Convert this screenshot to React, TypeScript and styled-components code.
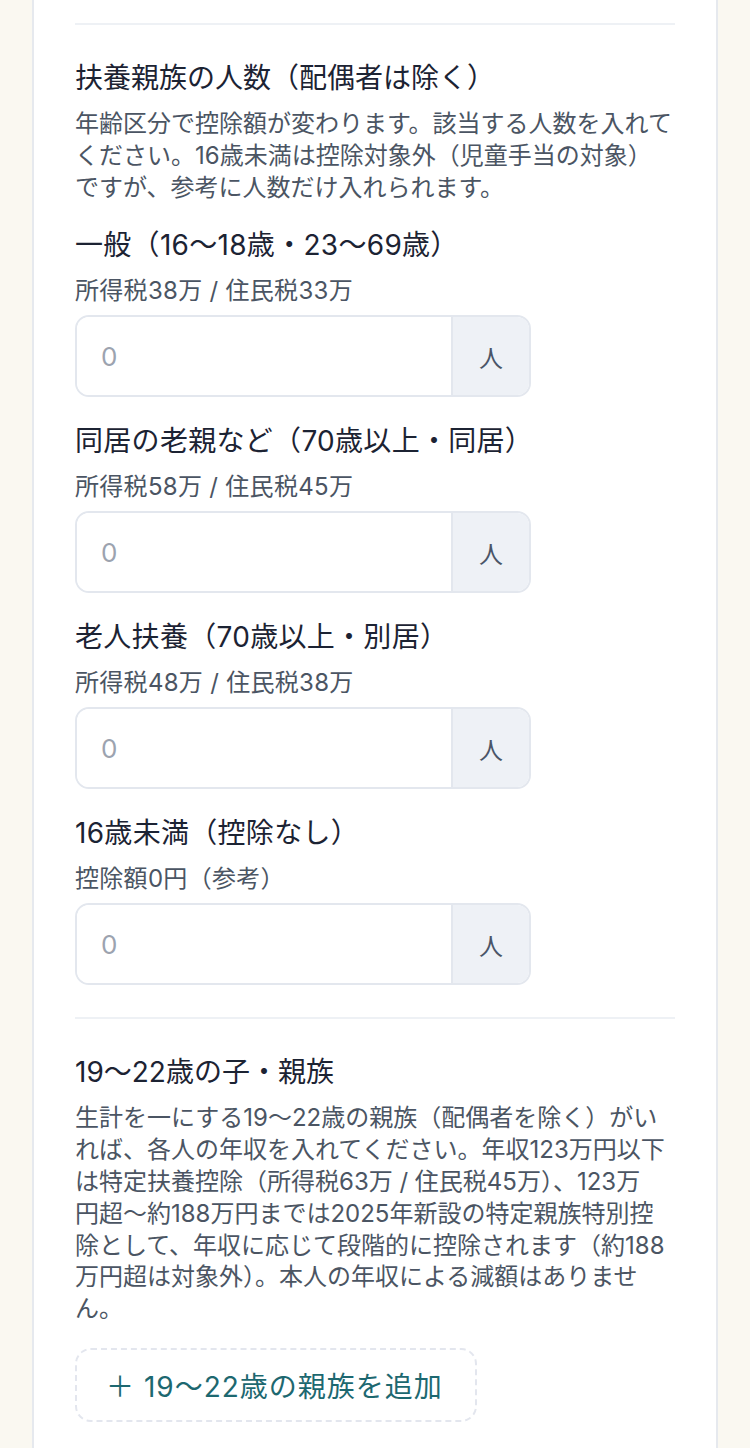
import styled, { createGlobalStyle } from "styled-components";

const GlobalStyle = createGlobalStyle`
  html, body {
    margin: 0;
    padding: 0;
    background: #faf8f1;
  }
  body {
    font-family: Inter, "Noto Sans CJK JP", "Noto Sans", sans-serif;
    color: #1c2333;
  }
  * { box-sizing: border-box; }
`;

const Page = styled.div`
  padding: 0 32px;
  min-height: 1448px;
`;

const Card = styled.div`
  background: #fff;
  border-left: 2px solid #e6e9ee;
  border-right: 2px solid #e6e9ee;
  padding: 23px 41px 80px;
  min-height: 1448px;
`;

const Divider = styled.hr`
  border: none;
  height: 2px;
  background: #eef1f5;
  margin: 0;
`;

const Section = styled.section`
  padding-top: 34px;
  padding-bottom: 32px;
`;

const SectionTitle = styled.h2`
  margin: 0;
  font-size: 28px;
  font-weight: 400;
  line-height: 38px;
  color: #1c2333;
`;

const Note = styled.p`
  margin: 11px 0 0;
  font-size: 24px;
  line-height: 31.8px;
  color: #4b5563;
`;

const Line = styled.span`
  display: block;
  white-space: nowrap;
`;

const Field = styled.div`
  margin-top: 24px;
  & + & {
    margin-top: 26px;
  }
`;

const FieldLabel = styled.label`
  display: block;
  font-size: 28px;
  line-height: 36px;
  letter-spacing: 0.3px;
  color: #1c2333;
`;

const FieldHint = styled.div`
  margin-top: 14px;
  font-size: 24px;
  line-height: 28px;
  letter-spacing: 0.3px;
  color: #4b5563;
`;

const InputGroup = styled.div`
  margin-top: 10px;
  display: flex;
  width: 456px;
  height: 82px;
  border: 2px solid #e3e7ee;
  border-radius: 14px;
  overflow: hidden;
`;

const NumberInput = styled.input`
  flex: 1;
  min-width: 0;
  border: none;
  outline: none;
  padding: 0 24px;
  font-family: inherit;
  font-size: 26px;
  color: #1c2333;
  background: #fff;
  &::placeholder {
    color: #9ca3af;
  }
`;

const Suffix = styled.span`
  width: 78px;
  display: flex;
  align-items: center;
  justify-content: center;
  background: #eef1f6;
  border-left: 2px solid #e3e7ee;
  font-size: 24px;
  color: #4a5568;
`;

const AddButton = styled.button`
  margin-top: 23px;
  height: 74px;
  padding: 0 32px 0 29px;
  background: #fff;
  border: 2px dashed #e3e6ee;
  border-radius: 16px;
  font-family: inherit;
  font-size: 28px;
  letter-spacing: 1px;
  color: #1d6870;
  cursor: pointer;
`;

const dependents = [
  { label: "一般（16〜18歳・23〜69歳）", hint: "所得税38万 / 住民税33万" },
  { label: "同居の老親など（70歳以上・同居）", hint: "所得税58万 / 住民税45万" },
  { label: "老人扶養（70歳以上・別居）", hint: "所得税48万 / 住民税38万" },
  { label: "16歳未満（控除なし）", hint: "控除額0円（参考）" },
];

const introLines = [
  "年齢区分で控除額が変わります。該当する人数を入れて",
  "ください。16歳未満は控除対象外（児童手当の対象）",
  "ですが、参考に人数だけ入れられます。",
];

const youngLines = [
  "生計を一にする19〜22歳の親族（配偶者を除く）がい",
  "れば、各人の年収を入れてください。年収123万円以下",
  "は特定扶養控除（所得税63万 / 住民税45万）、123万",
  "円超〜約188万円までは2025年新設の特定親族特別控",
  "除として、年収に応じて段階的に控除されます（約188",
  "万円超は対象外）。本人の年収による減額はありませ",
  "ん。",
];

export default function App() {
  return (
    <>
      <GlobalStyle />
      <Page>
        <Card>
          <Divider />
          <Section>
            <SectionTitle>扶養親族の人数（配偶者は除く）</SectionTitle>
            <Note>
              {introLines.map((l) => (
                <Line key={l}>{l}</Line>
              ))}
            </Note>
            {dependents.map((d) => (
              <Field key={d.label}>
                <FieldLabel>{d.label}</FieldLabel>
                <FieldHint>{d.hint}</FieldHint>
                <InputGroup>
                  <NumberInput type="number" placeholder="0" />
                  <Suffix>人</Suffix>
                </InputGroup>
              </Field>
            ))}
          </Section>
          <Divider />
          <Section>
            <SectionTitle>19〜22歳の子・親族</SectionTitle>
            <Note>
              {youngLines.map((l) => (
                <Line key={l}>{l}</Line>
              ))}
            </Note>
            <AddButton type="button">＋ 19〜22歳の親族を追加</AddButton>
          </Section>
        </Card>
      </Page>
    </>
  );
}
